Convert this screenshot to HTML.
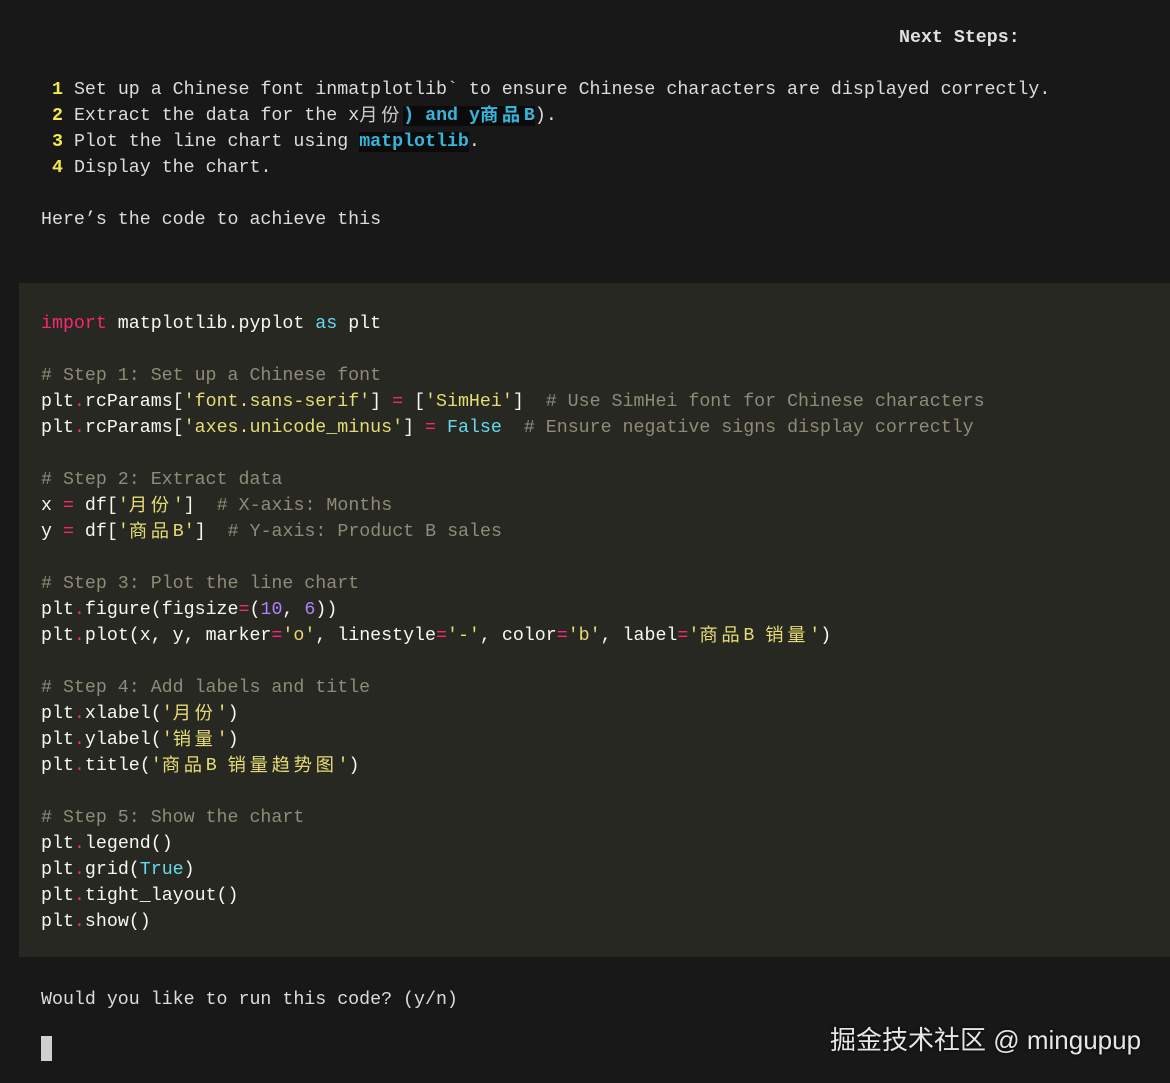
<!DOCTYPE html>
<html><head><meta charset="utf-8"><style>
html,body{margin:0;padding:0;background:#181818;width:1170px;height:1083px;overflow:hidden;position:relative}
pre{margin:0;font-family:"Liberation Mono","Noto Sans CJK SC",monospace;font-size:18.3px;line-height:26px;color:#dcdcdc;white-space:pre;position:absolute;left:41px}
.c{letter-spacing:3.7px;font-family:"Noto Sans CJK SC",sans-serif;display:inline-block;height:26px;line-height:22px;vertical-align:top;overflow:hidden}
.code{position:absolute;left:19px;top:283px;width:1151px;height:674px;background:#272822}
.k{color:#f92672}.b{color:#66d9ef}.s{color:#e6db74}.n{color:#ae81ff}.m{color:#8f8b78}
.w{color:#f8f8f2}
.num{color:#f5e94a;font-weight:bold}
.ic{background:#0b0b0b;color:#35b6dc;font-weight:bold}
</style></head><body>
<pre style="top:25px;left:41px"><span style="position:absolute;left:858px;top:0;font-weight:bold;color:#e0e0e0">Next Steps:</span>

 <span class="num">1</span> Set up a Chinese font inmatplotlib` to ensure Chinese characters are displayed correctly.
 <span class="num">2</span> Extract the data for the x<span class="c" style="color:#ccc">月份</span><span class="ic">) and y<span class="c">商品</span>B</span>).
 <span class="num">3</span> Plot the line chart using <span class="ic">matplotlib</span>.
 <span class="num">4</span> Display the chart.

Here’s the code to achieve this</pre>
<div class="code"></div>
<pre class="w" style="top:311px"><span class="k">import</span> matplotlib.pyplot <span class="b">as</span> plt

<span class="m"># Step 1: Set up a Chinese font</span>
plt<span class="k">.</span>rcParams[<span class="s">'font.sans-serif'</span>] <span class="k">=</span> [<span class="s">'SimHei'</span>]  <span class="m"># Use SimHei font for Chinese characters</span>
plt<span class="k">.</span>rcParams[<span class="s">'axes.unicode_minus'</span>] <span class="k">=</span> <span class="b">False</span>  <span class="m"># Ensure negative signs display correctly</span>

<span class="m"># Step 2: Extract data</span>
x <span class="k">=</span> df[<span class="s">'<span class="c">月份</span>'</span>]  <span class="m"># X-axis: Months</span>
y <span class="k">=</span> df[<span class="s">'<span class="c">商品</span>B'</span>]  <span class="m"># Y-axis: Product B sales</span>

<span class="m"># Step 3: Plot the line chart</span>
plt<span class="k">.</span>figure(figsize<span class="k">=</span>(<span class="n">10</span>, <span class="n">6</span>))
plt<span class="k">.</span>plot(x, y, marker<span class="k">=</span><span class="s">'o'</span>, linestyle<span class="k">=</span><span class="s">'-'</span>, color<span class="k">=</span><span class="s">'b'</span>, label<span class="k">=</span><span class="s">'<span class="c">商品</span>B <span class="c">销量</span>'</span>)

<span class="m"># Step 4: Add labels and title</span>
plt<span class="k">.</span>xlabel(<span class="s">'<span class="c">月份</span>'</span>)
plt<span class="k">.</span>ylabel(<span class="s">'<span class="c">销量</span>'</span>)
plt<span class="k">.</span>title(<span class="s">'<span class="c">商品</span>B <span class="c">销量趋势图</span>'</span>)

<span class="m"># Step 5: Show the chart</span>
plt<span class="k">.</span>legend()
plt<span class="k">.</span>grid(<span class="b">True</span>)
plt<span class="k">.</span>tight_layout()
plt<span class="k">.</span>show()</pre>
<pre style="top:987px">Would you like to run this code? (y/n)</pre>
<div style="position:absolute;left:41px;top:1036px;width:11px;height:25px;background:#d0d0d0"></div>
<div style="position:absolute;left:830px;top:1020px;font-family:'Liberation Sans','Noto Sans CJK SC',sans-serif;font-size:26px;color:#e6e6e6;text-shadow:0 0 3px #000">掘金技术社区 @ mingupup</div>
</body></html>
